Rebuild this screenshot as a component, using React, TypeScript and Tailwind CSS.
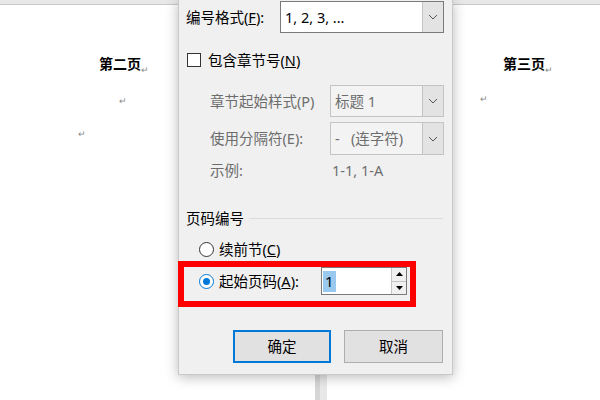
import React from "react";

function Chevron() {
  return (
    <svg width="10" height="6" viewBox="0 0 10 6">
      <path d="M1 1l4 4 4-4" stroke="#555" strokeWidth="1" fill="none" />
    </svg>
  );
}

function Select({ value, width, disabled }: { value: string; width: string; disabled?: boolean }) {
  return (
    <div
      className={`flex h-full ${width} border ${
        disabled ? "border-[#c4c4c4] bg-[#f3f3f3] text-[#6d6d6d]" : "border-[#7a7a7a] bg-white text-black"
      }`}
    >
      <div className="flex-1 flex items-center pl-[4px] whitespace-pre">{value}</div>
      <div className="w-[21px] flex items-center justify-center bg-[#e3e3e3] border-l border-[#c4c4c4]">
        <Chevron />
      </div>
    </div>
  );
}

function Radio({ checked }: { checked?: boolean }) {
  return (
    <div
      className={`w-[15px] h-[15px] rounded-full border bg-white flex items-center justify-center ${
        checked ? "border-[#0078d7]" : "border-[#333]"
      }`}
    >
      {checked && <div className="w-[7px] h-[7px] rounded-full bg-[#0078d7]" />}
    </div>
  );
}

function Mark() {
  return <span className="text-[9px] leading-none text-[#8a8a8a] align-bottom">↵</span>;
}

export default function App() {
  return (
    <div className="relative w-[600px] h-[400px] overflow-hidden bg-white flex flex-col font-['Noto_Sans','Noto_Sans_CJK_SC',sans-serif]">
      {/* top band */}
      <div className="h-[5px] bg-[#e8e8e8] border-b border-[#c8c8c8]" />

      {/* pages */}
      <div className="flex flex-1">
        <div className="w-[315px] bg-white flex flex-col">
          <div className="mt-[49px] h-[20px] pl-[99px] flex items-end">
            <span className="text-[14px] font-bold leading-[20px] text-black">第二页</span>
            <Mark />
          </div>
          <div className="mt-[16px] h-[20px] pl-[119px] flex items-center">
            <Mark />
          </div>
          <div className="mt-[13px] h-[20px] pl-[78px] flex items-center">
            <Mark />
          </div>
        </div>
        <div className="w-[5px] bg-[#d6d6d6]" />
        <div className="w-[7px] bg-[#e8e8e8]" />
        <div className="flex-1 bg-white flex flex-col">
          <div className="mt-[49px] h-[20px] pl-[176px] flex items-end">
            <span className="text-[14px] font-bold leading-[20px] text-black">第三页</span>
            <Mark />
          </div>
          <div className="mt-[14px] h-[20px] pl-[153px] flex items-center">
            <Mark />
          </div>
        </div>
      </div>

      {/* dialog */}
      <div className="absolute left-[178px] top-0 w-[275px] h-[375px] bg-[#f0f0f0] border-x border-b border-[#c9c9c9] shadow-[0_2px_12px_rgba(0,0,0,0.28)] flex flex-col text-[14.5px] leading-none text-black">
        {/* 编号格式 */}
        <div className="mt-[1px] h-[32px] flex items-center">
          <div className="w-[101px] pl-[7px]">编号格式(<u>F</u>):</div>
          <Select value="1, 2, 3, ..." width="w-[164px]" />
        </div>

        {/* 包含章节号 */}
        <div className="mt-[17px] h-[20px] flex items-center pl-[8px]">
          <div className="w-[14px] h-[14px] border border-[#333] bg-white" />
          <span className="ml-[7px]">包含章节号(<u>N</u>)</span>
        </div>

        <div className="mt-[15px] h-[32px] flex items-center text-[#6d6d6d]">
          <div className="w-[151px] pl-[31px]">章节起始样式(P)</div>
          <Select value="标题 1" width="w-[114px]" disabled />
        </div>

        <div className="mt-[5px] h-[33px] flex items-center text-[#6d6d6d]">
          <div className="w-[151px] pl-[31px]">使用分隔符(E):</div>
          <Select value="-   (连字符)" width="w-[114px]" disabled />
        </div>

        <div className="mt-[5px] h-[20px] flex items-center text-[#6d6d6d]">
          <div className="w-[151px] pl-[31px]">示例:</div>
          <div className="pl-[2px]">1-1, 1-A</div>
        </div>

        {/* 页码编号 */}
        <div className="mt-[28px] h-[20px] flex items-center pl-[7px] pr-[9px]">
          <span>页码编号</span>
          <div className="flex-1 ml-[5px] h-px bg-[#dcdcdc]" />
        </div>

        <div className="mt-[11px] h-[20px] flex items-center pl-[20px]">
          <Radio />
          <span className="ml-[5px]">续前节(<u>C</u>)</span>
        </div>

        <div className="mt-[2px] -ml-px w-[238px] h-[46px] border-[6px] border-[#ff0000] flex items-start">
          <div className="h-[28px] flex items-center pl-[15px]">
            <Radio checked />
            <span className="ml-[5px]">起始页码(<u>A</u>):</span>
          </div>
          <div className="ml-auto mr-[3px] w-[86px] h-[28px] border border-[#7a7a7a] bg-white flex">
            <div className="flex-1 flex items-center pl-[1px]">
              <span className="bg-[#99c9ef] px-[2px] h-[21px] flex items-center text-[15px]">1</span>
            </div>
            <div className="w-[15px] flex flex-col border-l border-[#c4c4c4]">
              <div className="flex-1 flex items-center justify-center bg-[#f0f0f0] border-b border-[#c4c4c4]">
                <svg width="7" height="4" viewBox="0 0 7 4">
                  <path d="M0 4L3.5 0L7 4Z" fill="#000" />
                </svg>
              </div>
              <div className="flex-1 flex items-center justify-center bg-[#f0f0f0]">
                <svg width="7" height="4" viewBox="0 0 7 4">
                  <path d="M0 0L7 0L3.5 4Z" fill="#000" />
                </svg>
              </div>
            </div>
          </div>
        </div>

        {/* buttons */}
        <div className="mt-[23px] h-[33px] flex pl-[54px] gap-[13px]">
          <button className="w-[98px] h-full bg-[#e1e1e1] border-2 border-[#0078d7] text-[14.5px]">确定</button>
          <button className="w-[99px] h-full bg-[#e1e1e1] border border-[#adadad] text-[14.5px]">取消</button>
        </div>
      </div>
    </div>
  );
}
